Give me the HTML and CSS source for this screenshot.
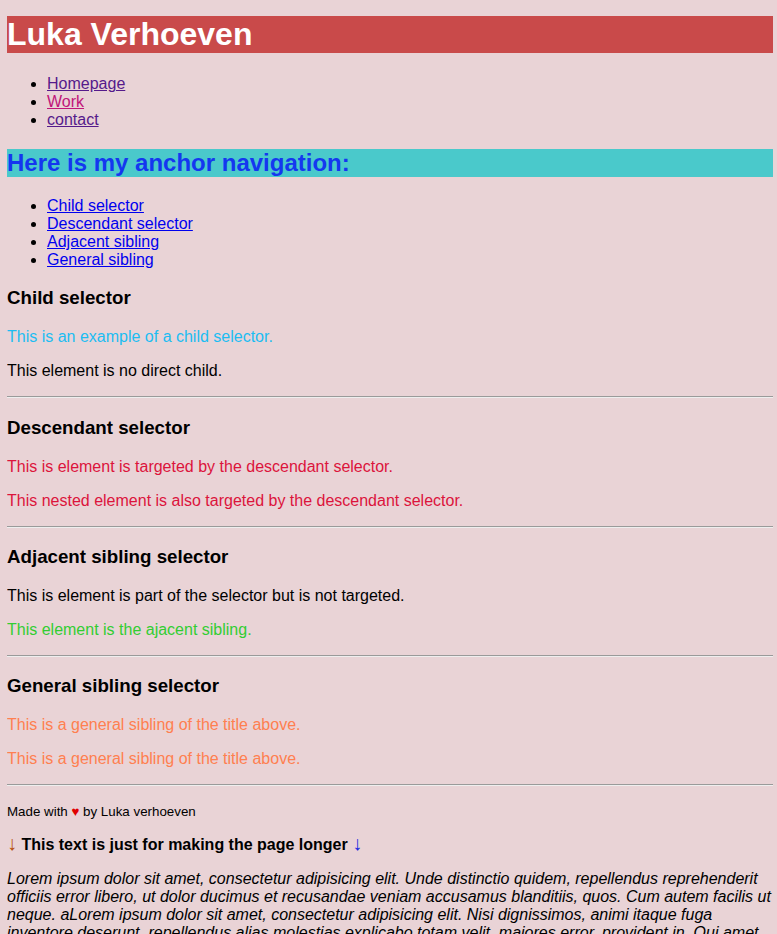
FILE: index.html
```html
<!DOCTYPE html>
<html lang="en">
<head>
<meta charset="utf-8">
<title>Luka Verhoeven</title>
<link rel="stylesheet" href="styles.css">
</head>
<body>
<header>
  <h1 class="title">Luka Verhoeven</h1>
  <nav>
    <ul>
      <li><a class="visited" href="#">Homepage</a></li>
      <li><a class="hot" href="#">Work</a></li>
      <li><a class="visited" href="#">contact</a></li>
    </ul>
  </nav>
</header>
<main>
  <h2 class="anchor-title">Here is my anchor navigation:</h2>
  <ul class="anchor-list">
    <li><a class="anchor" href="#child">Child selector</a></li>
    <li><a class="anchor" href="#descendant">Descendant selector</a></li>
    <li><a class="anchor" href="#adjacent">Adjacent sibling</a></li>
    <li><a class="anchor" href="#general">General sibling</a></li>
  </ul>

  <section id="child" class="sec-child">
    <h3>Child selector</h3>
    <p class="child">This is an example of a child selector.</p>
    <p>This element is no direct child.</p>
  </section>
  <hr>
  <section id="descendant" class="sec-desc">
    <h3>Descendant selector</h3>
    <p class="desc">This is element is targeted by the descendant selector.</p>
    <p class="desc">This nested element is also targeted by the descendant selector.</p>
  </section>
  <hr>
  <section id="adjacent" class="sec-adj">
    <h3>Adjacent sibling selector</h3>
    <p>This is element is part of the selector but is not targeted.</p>
    <p class="adj">This element is the ajacent sibling.</p>
  </section>
  <hr>
  <section id="general">
    <h3>General sibling selector</h3>
    <p class="gen">This is a general sibling of the title above.</p>
    <p class="gen">This is a general sibling of the title above.</p>
  </section>
  <hr>
</main>
<footer>
  <p><small>Made with <span class="heart">&#9829;</span> by Luka verhoeven</small></p>
  <p class="longer"><span class="arrow">&#8595;</span> This text is just for making the page longer <span class="arrow arrow-blue">&#8595;</span></p>
  <p class="lorem">Lorem ipsum dolor sit amet, consectetur adipisicing elit. Unde distinctio quidem, repellendus reprehenderit officiis error libero, ut dolor ducimus et recusandae veniam accusamus blanditiis, quos. Cum autem facilis ut neque. aLorem ipsum dolor sit amet, consectetur adipisicing elit. Nisi dignissimos, animi itaque fuga inventore deserunt, repellendus alias molestias explicabo totam velit, maiores error, provident in. Qui amet, dolorum voluptatibus commodi quos ea at vitae ipsum nemo eligendi officia maxime sed. Lorem ipsum dolor sit amet, consectetur adipisicing elit. Eius, quo, dolorem. Aliquid vero laboriosam fugit.</p>
</footer>
</body>
</html>
```
FILE: styles.css
```css
html {
  background: #e9d3d6;
}

body {
  margin: 0 4px 0 7px;
  font-family: "Liberation Sans", Arial, sans-serif;
  font-size: 16px;
  color: #000;
  background: #e9d3d6;
}

.title {
  margin: 16px 0 22.44px;
  font-size: 32px;
  font-weight: bold;
  background: #c94a4a;
  color: #fff;
}

ul {
  margin: 16px 0;
  padding-left: 40px;
}

a.visited {
  color: #551a8b;
}

a.hot {
  color: #c0157a;
}

a.anchor {
  color: #0000ee;
}

.anchor-title {
  margin: 19.92px 0;
  font-size: 24px;
  background: #4ac9cb;
  color: #1437f0;
}

h3 {
  font-size: 18.72px;
  margin: 18.72px 0;
}

.sec-child h3 {
  margin-top: 17.72px;
}

.sec-desc h3 {
  margin-top: 19.72px;
}

.sec-adj h3 {
  margin-top: 17.72px;
}

p {
  margin: 16px 0;
}

.child {
  color: #1cbdf2;
}

.desc {
  color: #dc143c;
}

.adj {
  color: #32cd32;
}

.gen {
  color: #ff7f50;
}

hr {
  margin: 8px 0;
  border: 0;
  border-top: 1px solid #9a9a9a;
  border-bottom: 1px solid #eeeeee;
  height: 0;
}

.heart {
  color: #e00000;
}

.longer {
  font-weight: bold;
}

.arrow {
  font-weight: normal;
  font-size: 20px;
  line-height: 0;
  color: #b8500f;
}

.arrow-blue {
  color: #1a2ae0;
}

.lorem {
  font-style: italic;
}
```
